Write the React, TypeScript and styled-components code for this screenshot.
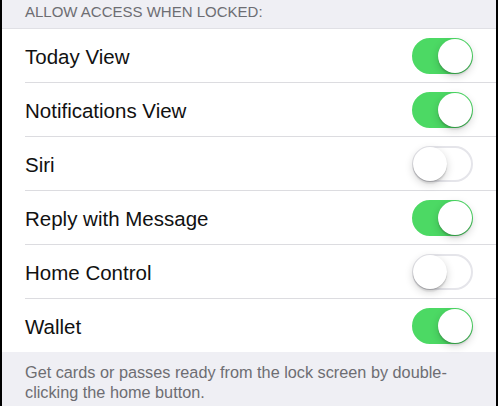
import styled, { createGlobalStyle } from "styled-components";

const GlobalStyle = createGlobalStyle`
  html, body {
    margin: 0;
    padding: 0;
    background: #000;
  }
  body {
    font-family: "Liberation Sans", Arial, sans-serif;
    -webkit-font-smoothing: antialiased;
  }
`;

interface Setting {
  label: string;
  on: boolean;
}

const settings: Setting[] = [
  { label: "Today View", on: true },
  { label: "Notifications View", on: true },
  { label: "Siri", on: false },
  { label: "Reply with Message", on: true },
  { label: "Home Control", on: false },
  { label: "Wallet", on: true },
];

const App = () => {
  return (
    <>
      <GlobalStyle />
      <Screen>
        <SectionHeader>ALLOW ACCESS WHEN LOCKED:</SectionHeader>
        <List>
          {settings.map((s) => (
            <Row key={s.label}>
              <Label>{s.label}</Label>
              <Toggle $on={s.on}>
                <Knob $on={s.on} />
              </Toggle>
            </Row>
          ))}
        </List>
        <Footer>
          Get cards or passes ready from the lock screen by double-clicking the home button.
        </Footer>
      </Screen>
    </>
  );
};

const Screen = styled.div`
  width: 498px;
  height: 406px;
  box-sizing: border-box;
  border-left: 2px solid #000;
  border-right: 2px solid #000;
  background: #efeff4;
  overflow: hidden;
  display: flex;
  flex-direction: column;
`;

const SectionHeader = styled.div`
  height: 28px;
  box-sizing: border-box;
  padding: 3px 0 0 23px;
  font-size: 15px;
  line-height: 18px;
  color: #6d6d72;
`;

const List = styled.div`
  background: #fff;
  border-top: 1px solid #e0e0e5;
`;

const Row = styled.div`
  display: flex;
  align-items: center;
  justify-content: space-between;
  height: 54px;
  box-sizing: border-box;
  margin-left: 23px;
  padding: 0 23px 0 0;
  border-bottom: 1px solid #dcdce0;

  &:last-child {
    border-bottom: none;
    height: 53px;
  }
`;

const Label = styled.span`
  font-size: 20.5px;
  color: #111;
  padding-top: 2px;
`;

const Toggle = styled.div<{ $on: boolean }>`
  position: relative;
  width: 61px;
  height: 36px;
  box-sizing: border-box;
  border-radius: 18px;
  background: ${({ $on }) => ($on ? "#4cd964" : "#fff")};
  border: 2px solid ${({ $on }) => ($on ? "#4cd964" : "#e5e5ea")};
`;

const Knob = styled.div<{ $on: boolean }>`
  position: absolute;
  top: -1px;
  left: ${({ $on }) => ($on ? "24px" : "-1px")};
  width: 34px;
  height: 34px;
  border-radius: 50%;
  background: #fff;
  box-shadow: 0 3px 8px rgba(0, 0, 0, 0.18), 0 1px 1px rgba(0, 0, 0, 0.16),
    0 3px 1px rgba(0, 0, 0, 0.06);
`;

const Footer = styled.div`
  padding: 10px 23px 0 23px;
  font-size: 16.25px;
  line-height: 20px;
  color: #6d6d72;
`;

export default App;
